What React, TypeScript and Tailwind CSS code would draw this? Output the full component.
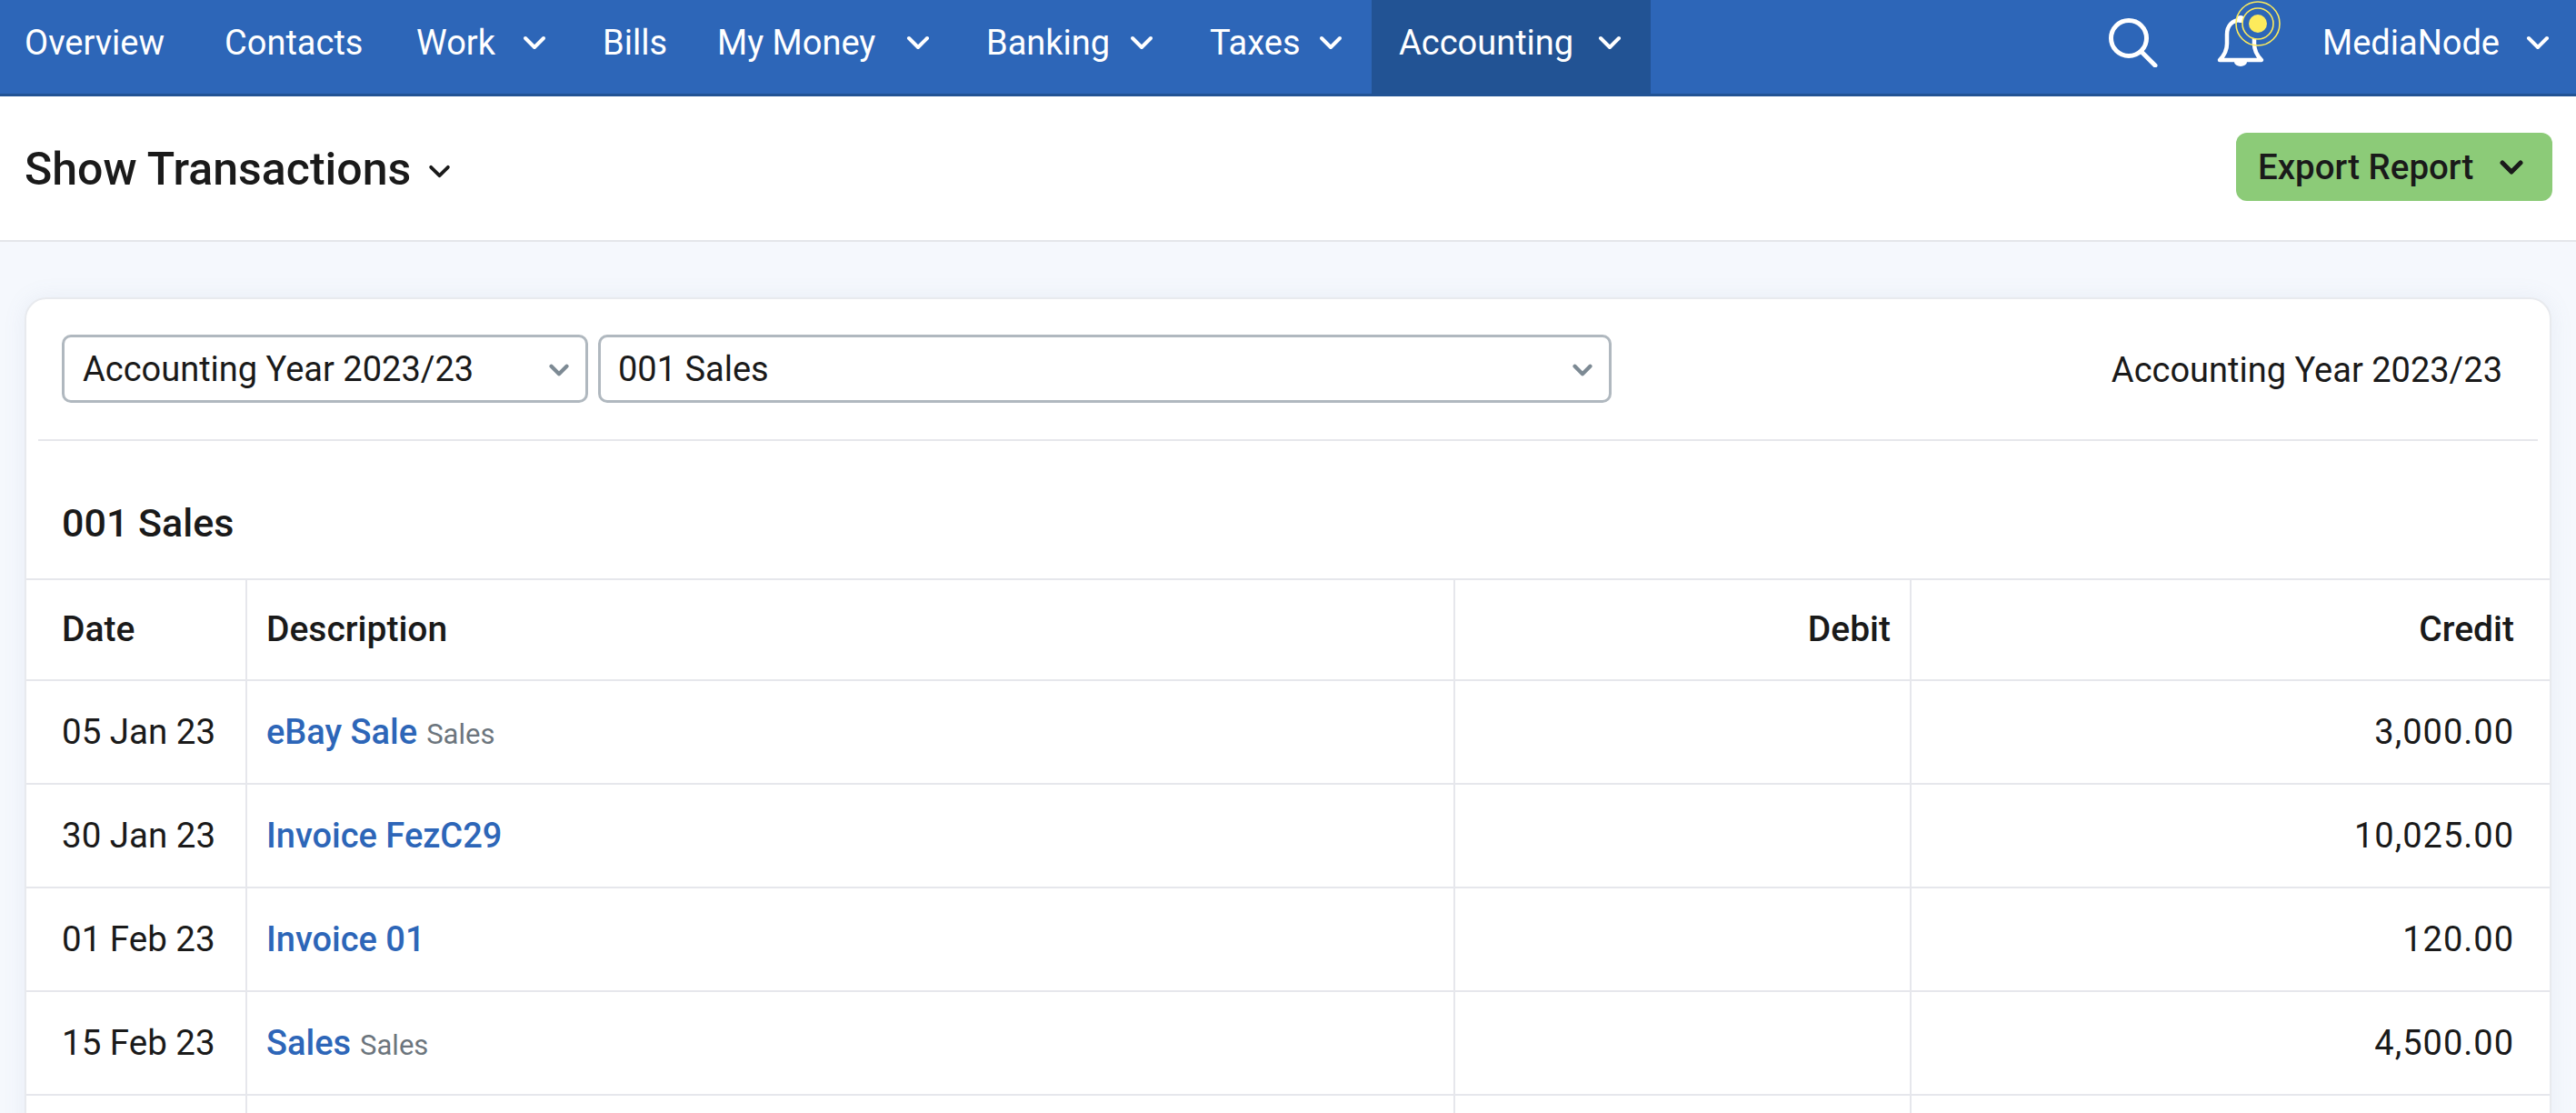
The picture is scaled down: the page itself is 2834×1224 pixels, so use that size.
import React from 'react';

const font = "font-['Roboto','Noto_Sans',sans-serif]";

const navItems = [
  { label: 'Overview', caret: false, width: 'w-[217px] pl-[27px]' },
  { label: 'Contacts', caret: false, width: 'w-[211px] pl-[30px]' },
  { label: 'Work', caret: true, width: 'w-[205px] pl-[30px]' },
  { label: 'Bills', caret: false, width: 'w-[126px] pl-[30px]' },
  { label: 'My Money', caret: true, width: 'w-[296px] pl-[30px]' },
  { label: 'Banking', caret: true, width: 'w-[246px] pl-[30px]' },
  { label: 'Taxes', caret: true, width: 'w-[208px] pl-[30px]' },
  { label: 'Accounting', caret: true, active: true, width: 'w-[307px] pl-[30px]' },
];

const rows = [
  { date: '05 Jan 23', title: 'eBay Sale', note: 'Sales', credit: '3,000.00' },
  { date: '30 Jan 23', title: 'Invoice FezC29', note: '', credit: '10,025.00' },
  { date: '01 Feb 23', title: 'Invoice 01', note: '', credit: '120.00' },
  { date: '15 Feb 23', title: 'Sales', note: 'Sales', credit: '4,500.00' },
  { date: '', title: '', note: '', credit: '' },
];

function Caret({ className = 'w-[26px] h-[16px]', width = 4 }: { className?: string; width?: number }) {
  return (
    <svg viewBox="0 0 26 16" className={className} fill="none" stroke="currentColor" strokeWidth={width} strokeLinecap="round" strokeLinejoin="round">
      <path d="M3 3l10 10L23 3" />
    </svg>
  );
}

function SearchIcon() {
  return (
    <svg viewBox="0 0 54 54" className="w-[54px] h-[54px]" fill="none" stroke="white" strokeWidth={5} strokeLinecap="round">
      <circle cx="22" cy="22" r="19.5" />
      <path d="M36 37l15 15" />
    </svg>
  );
}

function BellIcon() {
  return (
    <svg viewBox="0 0 74 76" className="w-[74px] h-[76px]" fill="none">
      <path d="M6 66c5-5 8-10 8-18V38c0-10 6-16 15-16s15 6 15 16v10c0 8 3 13 8 18z" stroke="white" strokeWidth={4.5} strokeLinejoin="round" />
      <path d="M22 68a7 5 0 0 0 14 0z" fill="white" />
      <circle cx="29" cy="21" r="4" fill="white" />
      <circle cx="48" cy="26" r="24" stroke="#fdeb5c" strokeWidth={1.6} fill="none" />
      <circle cx="48" cy="26" r="17" fill="#2d66b8" stroke="#fdeb5c" strokeWidth={1.6} />
      <circle cx="48" cy="26" r="10" fill="#fdeb5c" />
    </svg>
  );
}

export default function App() {
  return (
    <div className={`w-[2834px] h-[1224px] overflow-hidden bg-[#f5f8fd] text-[#1a1a1a] ${font}`}>
      <nav className="h-[106px] flex justify-between bg-[#2d66b8] border-b-[3px] border-[#225394] text-white text-[38px]">
        <ul className="flex">
          {navItems.map((item) => (
            <li
              key={item.label}
              className={`flex items-center justify-between pb-[9px] pr-[32px] ${item.width} ${item.active ? 'bg-[#225394]' : ''}`}
            >
              <span>{item.label}</span>
              {item.caret && <Caret />}
            </li>
          ))}
        </ul>
        <div className="flex items-start pr-[29px]">
          <div className="mt-[20px] mr-[62px]">
            <SearchIcon />
          </div>
          <BellIcon />
          <div className="flex items-center gap-[29px] ml-[45px] h-[94px]">
            <span>MediaNode</span>
            <Caret />
          </div>
        </div>
      </nav>

      <header className="h-[160px] flex items-center justify-between bg-white border-b-[2px] border-[#e4e6ea] pl-[27px] pr-[26px]">
        <div className="flex items-center gap-[19px] pt-[3px]">
          <h1 className="text-[50px] font-medium">Show Transactions</h1>
          <Caret className="w-[25px] h-[15px] mt-[4px]" />
        </div>
        <button className="w-[348px] h-[75px] mb-[3px] flex items-center justify-between pl-[24px] pr-[32px] rounded-[12px] bg-[#8ccb78] text-[38.5px] font-medium">
          Export Report
          <Caret width={5} />
        </button>
      </header>

      <main className="px-[27px] pt-[61px]">
        <section className="bg-white rounded-[24px] border-[2px] border-[#e8eaee] shadow-[0_0_24px_rgba(120,140,180,0.10)]">
          <div className="h-[156px] mx-[13px] border-b-[2px] border-[#e6e7ec] pl-[26px] pr-[39px] flex items-start justify-between">
            <div className="flex gap-[11px] mt-[39px] text-[38px]">
              <div className="w-[579px] h-[75px] flex items-center justify-between pt-[2px] pl-[20px] pr-[18px] rounded-[10px] border-[3px] border-[#b0b8bf]">
                Accounting Year 2023/23
                <Caret className="w-[22px] h-[16px] text-[#7d8a94]" width={5} />
              </div>
              <div className="w-[1115px] h-[75px] flex items-center justify-between pt-[2px] pl-[19px] pr-[18px] rounded-[10px] border-[3px] border-[#b0b8bf]">
                001 Sales
                <Caret className="w-[22px] h-[16px] text-[#7d8a94]" width={5} />
              </div>
            </div>
            <div className="mt-[50px] text-[38px]">Accounting Year 2023/23</div>
          </div>
          <h2 className="h-[151px] pl-[39px] pt-[66px] text-[43px] font-medium leading-[48px]">001 Sales</h2>
          <table className="w-full table-fixed border-collapse text-[38.5px]">
            <colgroup>
              <col className="w-[242px]" />
              <col className="w-[1329px]" />
              <col className="w-[502px]" />
              <col />
            </colgroup>
            <thead>
              <tr className="h-[111px] border-y-[2px] border-[#e6e7ec] text-[39px]">
                <th className="pl-[39px] text-left font-medium">Date</th>
                <th className="pl-[21px] text-left font-medium border-l-[2px] border-[#e6e7ec]">Description</th>
                <th className="pr-[21px] text-right font-medium border-l-[2px] border-[#e6e7ec]">Debit</th>
                <th className="pr-[39px] text-right font-medium border-l-[2px] border-[#e6e7ec]">Credit</th>
              </tr>
            </thead>
            <tbody>
              {rows.map((row, i) => (
                <tr key={i} className="h-[114px] border-b-[2px] border-[#e6e7ec]">
                  <td className="pl-[39px]">{row.date}</td>
                  <td className="pl-[21px] border-l-[2px] border-[#e6e7ec]">
                    <a className="text-[38px] font-medium text-[#2d66b8]">{row.title}</a>
                    {row.note && <span className="ml-[10px] text-[31px] text-[#6c757d]">{row.note}</span>}
                  </td>
                  <td className="border-l-[2px] border-[#e6e7ec]" />
                  <td className="pr-[39px] text-right text-[38px] tracking-[1px] border-l-[2px] border-[#e6e7ec]">{row.credit}</td>
                </tr>
              ))}
            </tbody>
          </table>
        </section>
      </main>
    </div>
  );
}
